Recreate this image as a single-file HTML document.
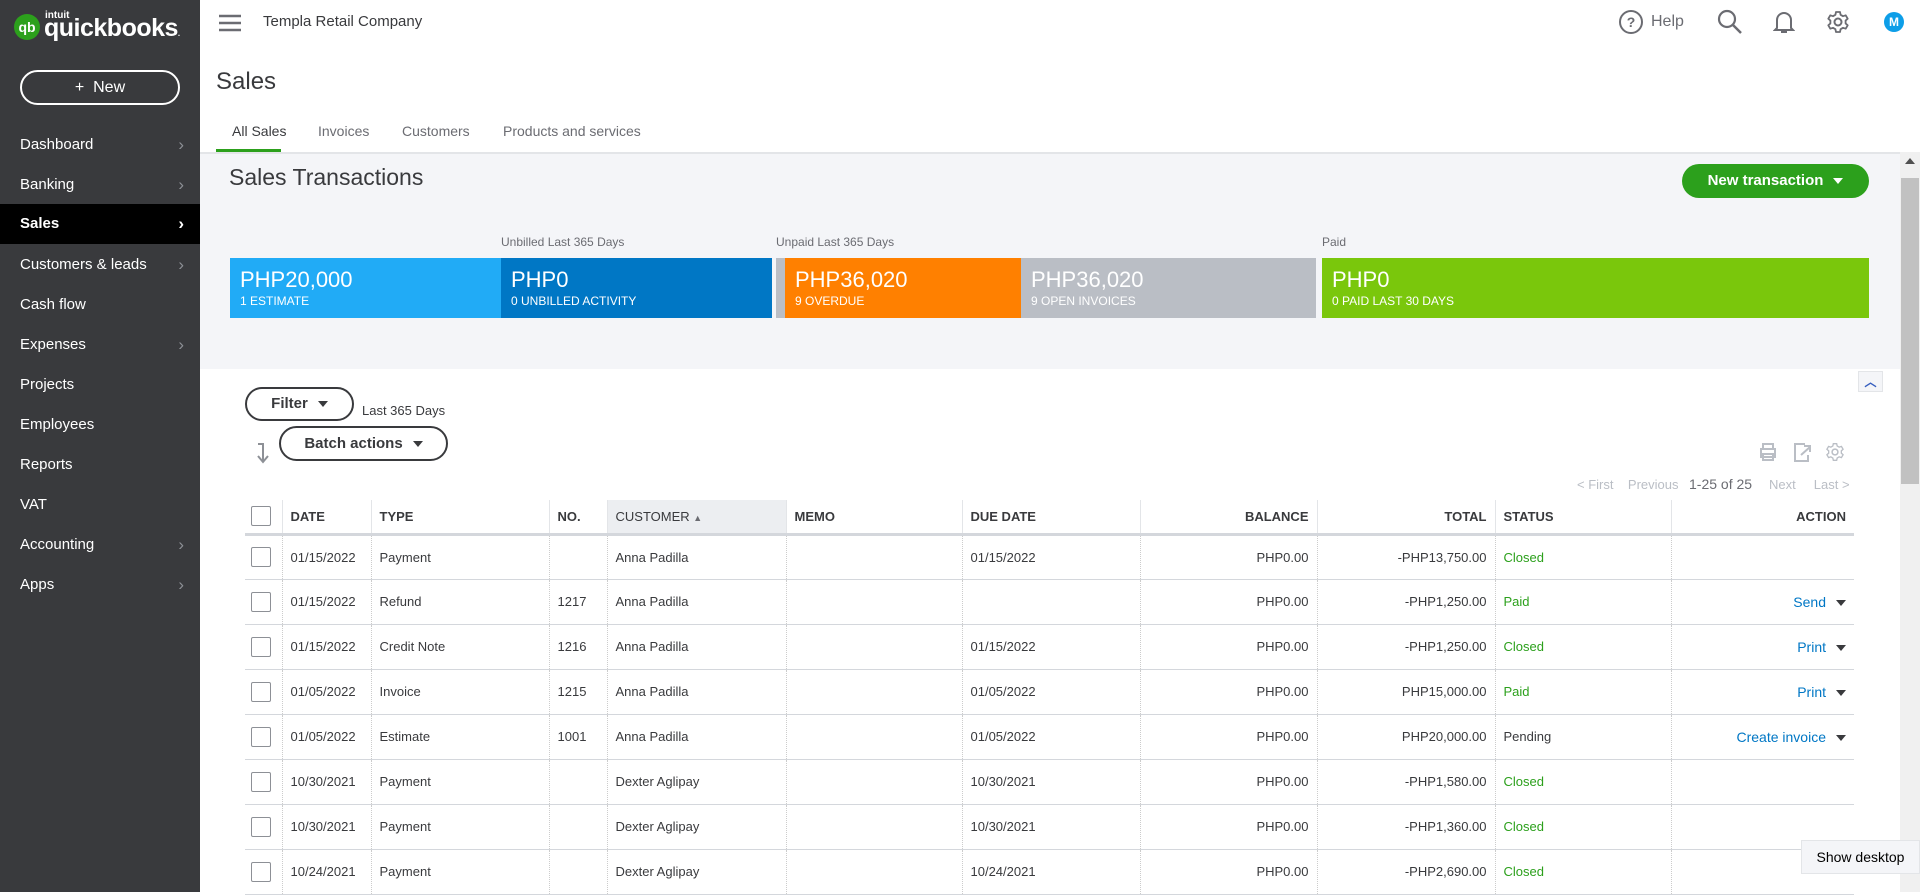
<!DOCTYPE html>
<html><head><meta charset="utf-8"><style>
*{margin:0;padding:0;box-sizing:border-box}
body{width:1920px;height:892px;overflow:hidden;font-family:"Liberation Sans",Arial,sans-serif;background:#fff;position:relative;color:#393a3d}
.a{position:absolute}
#side{left:0;top:0;width:200px;height:892px;background:#393a3d}
.nav{position:absolute;left:0;width:200px;height:40px;color:#fff;font-size:15px;line-height:40px;padding-left:20px}
.nav .ch{position:absolute;right:16px;top:0;color:#8d9096;font-size:17px}
.nav.on{background:#000;font-weight:bold}
.nav.on .ch{color:#fff}
.tab{position:absolute;top:123px;font-size:14px;color:#6b6c72}
.bar{position:absolute;top:258px;height:60px;color:#fff;padding:10px 10px}
.bar b{display:block;font-weight:normal;font-size:22px;line-height:24px}
.bar span{font-size:12px;display:block;margin-top:2px}
.lbl{position:absolute;top:235px;font-size:12px;color:#6b6c72}
.pill{position:absolute;border:2px solid #393a3d;border-radius:20px;font-weight:bold;font-size:15px;text-align:center;background:#fff}
table{position:absolute;left:245px;top:500px;width:1609px;border-collapse:collapse;font-size:13px}
td,th{height:45px;padding:0 8px;border-left:1px dotted #ccc;border-bottom:1px solid #d4d7dc;white-space:nowrap}
th{height:34px;font-weight:bold;text-align:left;font-size:13px;color:#393a3d;border-left:1px solid #e3e5e8;border-bottom:3px solid #d4d7dc}
td:first-child,th:first-child{border-left:none;width:37px;padding:0 0 0 6px}
.cb{width:20px;height:20px;border:1px solid #8d9096;border-radius:2px;background:#fff}
.r{text-align:right}
.g{color:#2ca01c}
.act{color:#0077c5;text-align:right;font-size:14px}
.tri{display:inline-block;width:0;height:0;border-left:5px solid transparent;border-right:5px solid transparent;border-top:6px solid #393a3d;margin-left:10px;vertical-align:middle}
</style></head><body>
<div id="side" class="a">
 <div class="a" style="left:14px;top:14px;width:26px;height:26px;border-radius:50%;background:#2ca01c;color:#fff;font-weight:bold;font-size:14px;text-align:center;line-height:26px">qb</div>
 <div class="a" style="left:45px;top:10px;color:#fff;font-size:10px;font-weight:bold">intuit</div>
 <div class="a" style="left:44px;top:14px;color:#fff;font-size:25px;font-weight:bold;letter-spacing:-0.5px">quickbooks<span style="font-size:8px">.</span></div>
 <div class="a" style="left:20px;top:70px;width:160px;height:35px;border:2px solid #fff;border-radius:20px;color:#fff;font-size:16px;text-align:center;line-height:31px">+&nbsp;&nbsp;New</div>
 <div class="nav" style="top:125px">Dashboard<span class="ch">›</span></div>
 <div class="nav" style="top:165px">Banking<span class="ch">›</span></div>
 <div class="nav on" style="top:204px">Sales<span class="ch">›</span></div>
 <div class="nav" style="top:245px">Customers &amp; leads<span class="ch">›</span></div>
 <div class="nav" style="top:285px">Cash flow</div>
 <div class="nav" style="top:325px">Expenses<span class="ch">›</span></div>
 <div class="nav" style="top:365px">Projects</div>
 <div class="nav" style="top:405px">Employees</div>
 <div class="nav" style="top:445px">Reports</div>
 <div class="nav" style="top:485px">VAT</div>
 <div class="nav" style="top:525px">Accounting<span class="ch">›</span></div>
 <div class="nav" style="top:565px">Apps<span class="ch">›</span></div>
</div>
<svg class="a" style="left:219px;top:14px" width="22" height="18"><path d="M0 2h22M0 9h22M0 16h22" stroke="#6b6c72" stroke-width="2.5"/></svg>
<div class="a" style="left:263px;top:13px;font-size:15px">Templa Retail Company</div>
<svg class="a" style="left:1618px;top:9px" width="26" height="26"><circle cx="13" cy="13" r="11" fill="none" stroke="#6b6c72" stroke-width="2"/><text x="13" y="18" text-anchor="middle" font-size="14" font-family="Liberation Sans" fill="#6b6c72" font-weight="bold">?</text></svg>
<div class="a" style="left:1651px;top:13px;font-size:16px;color:#6b6c72">Help</div>
<svg class="a" style="left:1717px;top:9px" width="26" height="26"><circle cx="10" cy="10" r="8" fill="none" stroke="#6b6c72" stroke-width="2.2"/><path d="M16 16l8 8" stroke="#6b6c72" stroke-width="2.5"/></svg>
<svg class="a" style="left:1773px;top:9px" width="22" height="26"><path d="M4 19V11a7 7 0 0 1 14 0v8l2 2H2z" fill="none" stroke="#6b6c72" stroke-width="2"/><path d="M8 23h6" stroke="#6b6c72" stroke-width="2"/></svg>
<svg class="a" style="left:1826px;top:10px" width="24" height="24" viewBox="0 0 24 24"><circle cx="12" cy="12" r="3.5" fill="none" stroke="#6b6c72" stroke-width="2"/><path d="M10 2h4l.6 2.8 2.4 1.4 2.7-.9 2 3.4-2.1 1.9v2.8l2.1 1.9-2 3.4-2.7-.9-2.4 1.4L14 22h-4l-.6-2.8-2.4-1.4-2.7.9-2-3.4 2.1-1.9V10.6L2.3 8.7l2-3.4 2.7.9 2.4-1.4z" fill="none" stroke="#6b6c72" stroke-width="1.8" stroke-linejoin="round"/></svg>
<div class="a" style="left:1884px;top:12px;width:20px;height:20px;border-radius:50%;background:#0d9ee8;color:#fff;font-weight:bold;font-size:12px;text-align:center;line-height:20px">M</div>
<div class="a" style="left:216px;top:68px;font-size:24px;color:#393a3d">Sales</div>
<div class="tab" style="left:232px;color:#393a3d">All Sales</div>
<div class="tab" style="left:318px">Invoices</div>
<div class="tab" style="left:402px">Customers</div>
<div class="tab" style="left:503px">Products and services</div>
<div class="a" style="left:216px;top:149px;width:65px;height:4px;background:#2ca01c"></div>
<div class="a" style="left:200px;top:152px;width:1700px;height:217px;background:#f4f5f8;border-top:2px solid #e3e5e8"></div>
<div class="a" style="left:229px;top:164px;font-size:23px;color:#393a3d">Sales Transactions</div>
<div class="a" style="left:1682px;top:164px;width:187px;height:34px;border-radius:18px;background:#2ca01c;color:#fff;font-weight:bold;font-size:15px;text-align:center;line-height:34px">New transaction<span class="tri" style="border-top-color:#fff"></span></div>
<div class="lbl" style="left:501px">Unbilled Last 365 Days</div>
<div class="lbl" style="left:776px">Unpaid Last 365 Days</div>
<div class="lbl" style="left:1322px">Paid</div>
<div class="bar" style="left:230px;width:271px;background:#21abf6"><b>PHP20,000</b><span>1 ESTIMATE</span></div>
<div class="bar" style="left:501px;width:271px;background:#0077c5"><b>PHP0</b><span>0 UNBILLED ACTIVITY</span></div>
<div class="bar" style="left:776px;width:9px;background:#babec5;padding:0"></div>
<div class="bar" style="left:785px;width:236px;background:#ff8000"><b>PHP36,020</b><span>9 OVERDUE</span></div>
<div class="bar" style="left:1021px;width:295px;background:#babec5"><b>PHP36,020</b><span>9 OPEN INVOICES</span></div>
<div class="bar" style="left:1322px;width:547px;background:#7ac70c"><b>PHP0</b><span>0 PAID LAST 30 DAYS</span></div>
<div class="a" style="left:1900px;top:152px;width:20px;height:740px;background:#f0f0f0"></div>
<div class="a" style="left:1901px;top:178px;width:18px;height:306px;background:#c1c1c1"></div>
<div class="a" style="left:1905px;top:158px;border-left:5px solid transparent;border-right:5px solid transparent;border-bottom:6px solid #505050"></div>
<div class="a" style="left:1858px;top:371px;width:25px;height:21px;border:1px solid #e3e5e8;background:#f4f5f8;color:#365ebf;text-align:center;font-size:12px;line-height:20px;font-weight:bold">︿</div>
<div class="pill" style="left:245px;top:387px;width:109px;height:34px;line-height:30px">Filter<span class="tri"></span></div>
<div class="a" style="left:362px;top:403px;font-size:13px">Last 365 Days</div>
<div class="pill" style="left:279px;top:426px;width:169px;height:35px;line-height:31px">Batch actions<span class="tri"></span></div>
<svg class="a" style="left:255px;top:442px" width="16" height="22"><path d="M3 2h5v17M3 14l5 6 5-6" fill="none" stroke="#8d9096" stroke-width="2"/></svg>
<svg class="a" style="left:1758px;top:442px" width="20" height="20"><path d="M5 7V2h10v5M3 7h14v8H3zM5 12h10v6H5z" fill="none" stroke="#babec5" stroke-width="2"/></svg>
<svg class="a" style="left:1792px;top:442px" width="20" height="20"><path d="M13 2H3v17h13v-6M9 13l9-8M12 4h6v6" fill="none" stroke="#babec5" stroke-width="2"/></svg>
<svg class="a" style="left:1825px;top:442px" width="20" height="20" viewBox="0 0 24 24"><circle cx="12" cy="12" r="3.5" fill="none" stroke="#babec5" stroke-width="1.8"/><path d="M10 2h4l.6 2.8 2.4 1.4 2.7-.9 2 3.4-2.1 1.9v2.8l2.1 1.9-2 3.4-2.7-.9-2.4 1.4L14 22h-4l-.6-2.8-2.4-1.4-2.7.9-2-3.4 2.1-1.9V10.6L2.3 8.7l2-3.4 2.7.9 2.4-1.4z" fill="none" stroke="#babec5" stroke-width="1.6"/></svg>
<div class="a" style="left:1577px;top:477px;font-size:13px;color:#babec5">&lt; First&nbsp;&nbsp;&nbsp;&nbsp;Previous</div>
<div class="a" style="left:1689px;top:476px;font-size:14px;color:#6b6c72">1-25 of 25</div>
<div class="a" style="left:1769px;top:477px;font-size:13px;color:#babec5">Next&nbsp;&nbsp;&nbsp;&nbsp;&nbsp;Last &gt;</div>
<table>
<tr><th><div class="cb"></div></th><th style="width:89px">DATE</th><th style="width:178px">TYPE</th><th style="width:58px">NO.</th><th style="width:179px;background:#eceef1;font-weight:normal">CUSTOMER <span style="font-size:9px;color:#6b6c72">▲</span></th><th style="width:176px">MEMO</th><th style="width:178px">DUE DATE</th><th class="r" style="width:177px">BALANCE</th><th class="r" style="width:178px">TOTAL</th><th style="width:176px">STATUS</th><th class="r">ACTION</th></tr>
<tr><td><div class="cb"></div></td><td>01/15/2022</td><td>Payment</td><td></td><td>Anna Padilla</td><td></td><td>01/15/2022</td><td class="r">PHP0.00</td><td class="r">-PHP13,750.00</td><td class="g">Closed</td><td></td></tr>
<tr><td><div class="cb"></div></td><td>01/15/2022</td><td>Refund</td><td>1217</td><td>Anna Padilla</td><td></td><td></td><td class="r">PHP0.00</td><td class="r">-PHP1,250.00</td><td class="g">Paid</td><td class="act">Send<span class="tri"></span></td></tr>
<tr><td><div class="cb"></div></td><td>01/15/2022</td><td>Credit Note</td><td>1216</td><td>Anna Padilla</td><td></td><td>01/15/2022</td><td class="r">PHP0.00</td><td class="r">-PHP1,250.00</td><td class="g">Closed</td><td class="act">Print<span class="tri"></span></td></tr>
<tr><td><div class="cb"></div></td><td>01/05/2022</td><td>Invoice</td><td>1215</td><td>Anna Padilla</td><td></td><td>01/05/2022</td><td class="r">PHP0.00</td><td class="r">PHP15,000.00</td><td class="g">Paid</td><td class="act">Print<span class="tri"></span></td></tr>
<tr><td><div class="cb"></div></td><td>01/05/2022</td><td>Estimate</td><td>1001</td><td>Anna Padilla</td><td></td><td>01/05/2022</td><td class="r">PHP0.00</td><td class="r">PHP20,000.00</td><td>Pending</td><td class="act">Create invoice<span class="tri"></span></td></tr>
<tr><td><div class="cb"></div></td><td>10/30/2021</td><td>Payment</td><td></td><td>Dexter Aglipay</td><td></td><td>10/30/2021</td><td class="r">PHP0.00</td><td class="r">-PHP1,580.00</td><td class="g">Closed</td><td></td></tr>
<tr><td><div class="cb"></div></td><td>10/30/2021</td><td>Payment</td><td></td><td>Dexter Aglipay</td><td></td><td>10/30/2021</td><td class="r">PHP0.00</td><td class="r">-PHP1,360.00</td><td class="g">Closed</td><td></td></tr>
<tr><td><div class="cb"></div></td><td>10/24/2021</td><td>Payment</td><td></td><td>Dexter Aglipay</td><td></td><td>10/24/2021</td><td class="r">PHP0.00</td><td class="r">-PHP2,690.00</td><td class="g">Closed</td><td></td></tr>
</table>
<div class="a" style="left:1801px;top:840px;width:119px;height:34px;background:#f4f5f8;border:1px solid #e3e5e8;font-size:14px;line-height:32px;text-align:center;color:#000">Show desktop</div>
</body></html>
